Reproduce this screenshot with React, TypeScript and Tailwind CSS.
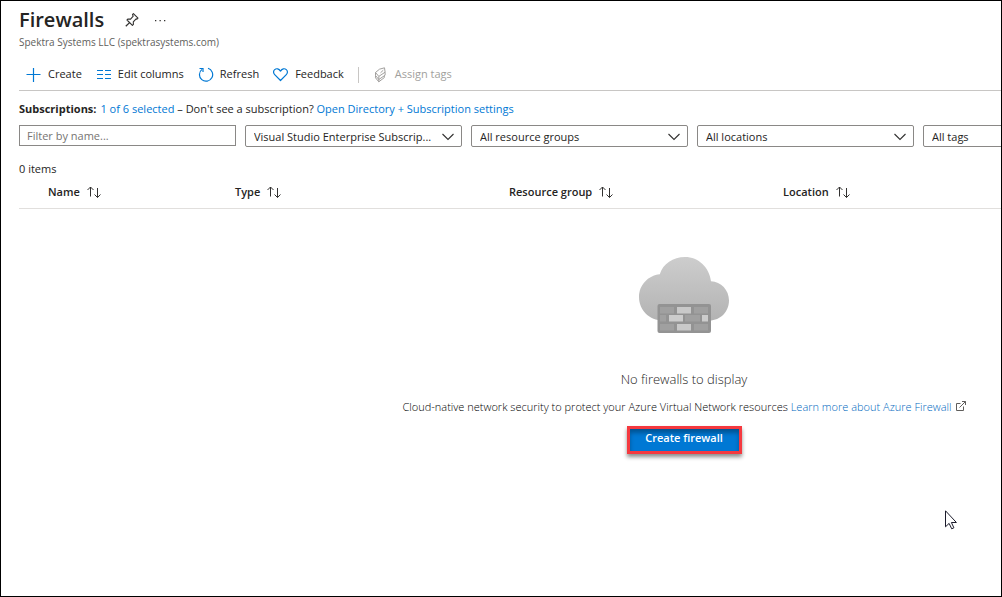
import React from "react";

function PinIcon() {
  return (
    <svg className="size-4" viewBox="0 0 16 16" fill="none" stroke="#323130" strokeWidth="1.1" strokeLinejoin="round" aria-hidden="true">
      <path d="M9.400 1.600l4.600 4.600-1 .9-.9-.2-2.800 2.900.1 2.600-1 1L3 8l1-1 2.600.1L9.200 4.200l-.7-1.600z" />
      <path d="M5.600 10.600L1.800 14.300" strokeWidth="1.300" />
    </svg>
  );
}

function PlusIcon() {
  return (
    <svg className="size-4" viewBox="0 0 16 16" fill="none" stroke="#0078d4" aria-hidden="true">
      <path d="M7.500 1v14M.5 7.500h14" strokeWidth="1.200" />
    </svg>
  );
}

function ColumnsIcon() {
  return (
    <svg className="size-4" viewBox="0 0 16 16" fill="none" stroke="#0078d4" strokeWidth="1.200" aria-hidden="true">
      <path d="M1 3.500h6M1 7.500h6M1 11.500h6M9 3.500h6M9 7.500h6M9 11.500h6" />
    </svg>
  );
}

function RefreshIcon() {
  return (
    <svg className="size-4" viewBox="0 0 16 16" fill="none" stroke="#0078d4" strokeWidth="1.200" aria-hidden="true">
      <path d="M10 1.300A6.600 6.600 0 1 1 4 2.400" />
      <path d="M1.500 1.500h3.500v3.500" />
    </svg>
  );
}

function HeartIcon() {
  return (
    <svg className="size-4" viewBox="0 0 16 16" fill="none" stroke="#0078d4" strokeWidth="1.200" strokeLinejoin="round" aria-hidden="true">
      <path d="M7.500 13.500L1.700 7.700C.1 6.100.3 3.800 1.700 2.600 3.400 1.200 5.900 1.500 7.500 4.100 9.100 1.500 11.600 1.200 13.300 2.600c1.400 1.200 1.600 3.500 0 5.100z" />
    </svg>
  );
}

function TagsIcon() {
  return (
    <svg className="size-4" viewBox="0 0 16 16" fill="none" stroke="#a19f9d" strokeWidth="1" strokeLinejoin="round" aria-hidden="true">
      <path d="M6.500 2.200L11.500.8l.6 4.400L5.800 9.400 2.500 5.500z" />
      <path d="M2.500 5.500v3l3.300 4 6.300-4.300v-3M2.500 8.500v2.300l3.300 4 5.500-4.200V9" />
      <path d="M5.800 9.400v5.400M7.500 5.800l2.800-2.600" />
    </svg>
  );
}

function SortIcon() {
  return (
    <svg className="h-4 w-4" viewBox="0 0 16 16" fill="none" stroke="#323130" strokeWidth="1" aria-hidden="true">
      <path d="M4.500 12.500v-9.500M1.500 6l3-3 3 3M11.500 4v9.500M8.500 10.500l3 3 3-3" />
    </svg>
  );
}

function ChevronIcon() {
  return (
    <svg className="pointer-events-none absolute top-1 right-1.5 size-4" viewBox="0 0 16 16" fill="none" stroke="#323130" strokeWidth="1.100" aria-hidden="true">
      <path d="M2.500 5L8 10.500 13.500 5" />
    </svg>
  );
}

function ExternalIcon() {
  return (
    <svg className="ml-1 inline size-2.5 align-baseline" viewBox="0 0 10 10" fill="none" stroke="#605e5c" strokeWidth="1" aria-hidden="true">
      <path d="M4.500 2.500h-4v7h7v-4M6 .5h3.500V4M9.500.5L3.500 6.500" />
    </svg>
  );
}

function FirewallArt() {
  const bricks: [number, number, number, string][] = [
    [21, 51, 14, "#a0a0a0"],
    [38, 51, 14, "#c9c9c9"],
    [55, 51, 14, "#a0a0a0"],
    [21, 59, 6, "#a0a0a0"],
    [30, 59, 14, "#cccccc"],
    [46, 59, 15, "#a0a0a0"],
    [63, 59, 6, "#cccccc"],
    [21, 68, 14, "#a0a0a0"],
    [38, 68, 14, "#c9c9c9"],
    [55, 68, 14, "#a0a0a0"],
  ];
  return (
    <svg className="h-[76px] w-[90px]" viewBox="0 0 90 76" role="img" aria-label="Firewall">
      <defs>
        <linearGradient id="cloud" x1="0" y1="0" x2="0" y2="1">
          <stop offset="0" stopColor="#cdcdcd" />
          <stop offset="1" stopColor="#b3b3b3" />
        </linearGradient>
      </defs>
      <path
        d="M90 43.500C90 33 82 24.800 72 24.300 70.500 10.500 59.500 0 46 0 34 0 24 6.800 20.800 17.200 9 18.500 0 28 0 40c0 13 10.500 23.500 24 23.500h46.500C81.500 63.500 90 54.500 90 43.500z"
        fill="url(#cloud)"
      />
      <rect x="18.500" y="47" width="53.500" height="29" rx="2" fill="#939393" />
      {bricks.map(([x, y, w, fill]) => (
        <rect key={`${x}-${y}`} x={x} y={y - 1} width={w} height="6.500" fill={fill} />
      ))}
    </svg>
  );
}

function Command({ icon, label, disabled }: { icon: React.ReactNode; label: string; disabled?: boolean }) {
  return (
    <button type="button" disabled={disabled} className="flex shrink-0 items-center gap-1.5 disabled:text-[#a19f9d]">
      {icon}
      {label}
    </button>
  );
}

function Filter({ label, value }: { label: string; value: string }) {
  return (
    <div className="relative w-[217px] shrink-0">
      <select aria-label={label} className="block h-[22px] w-full appearance-none rounded-xs border border-[#8a8886] bg-white pt-0.5 pr-6 pl-2">
        <option>{value}</option>
      </select>
      <ChevronIcon />
    </div>
  );
}

const columns = [
  { name: "Name", style: "w-[216px] pl-[29px]" },
  { name: "Type", style: "w-[274px]" },
  { name: "Resource group", style: "w-[274px]" },
  { name: "Location", style: "" },
];

export default function App() {
  return (
    <div className="min-h-screen overflow-hidden border border-black bg-white font-['Open_Sans','Noto_Sans',sans-serif] text-[11px] text-[#252423]">
      <div className="min-w-[1348px] pl-[18px]">
        <header className="pt-[5px]">
          <div className="flex h-7 items-center">
            <h1 className="text-xl leading-7 font-semibold">Firewalls</h1>
            <button type="button" aria-label="Pin" className="ml-5">
              <PinIcon />
            </button>
            <button type="button" aria-label="More" className="ml-[15px]">
              <svg className="h-4 w-3" viewBox="0 0 12 16" fill="#323130" aria-hidden="true">
                <path d="M0 8h1.300v1.300H0zM4.500 8h1.300v1.300H4.500zM9 8h1.300v1.300H9z" />
              </svg>
            </button>
          </div>
          <p className="text-[10px] leading-4 text-[#605e5c]">Spektra Systems LLC (spektrasystems.com)</p>
        </header>

        <div role="toolbar" aria-label="Commands" className="mt-[9px] flex h-8 items-center gap-3.5 border-b border-[#c8c6c4] pl-[7px]">
          <Command icon={<PlusIcon />} label="Create" />
          <Command icon={<ColumnsIcon />} label="Edit columns" />
          <Command icon={<RefreshIcon />} label="Refresh" />
          <Command icon={<HeartIcon />} label="Feedback" />
          <span className="h-4 w-px bg-[#c8c6c4]" />
          <Command icon={<TagsIcon />} label="Assign tags" disabled />
        </div>

        <p className="mt-2 leading-5">
          <strong className="mr-1 font-bold">Subscriptions:</strong>
          <a href="#subscriptions" className="text-[#0078d4]">1 of 6 selected</a> – Don't see a subscription?{" "}
          <a href="#settings" className="text-[#0078d4]">Open Directory + Subscription settings</a>
        </p>

        <div className="mt-1.5 flex items-start gap-[9px]">
          <input
            type="text"
            aria-label="Filter by name"
            placeholder="Filter by name..."
            className="h-[21px] w-[217px] shrink-0 border border-[#8a8886] px-[7px] placeholder:text-[#767472]"
          />
          <Filter label="Subscription" value="Visual Studio Enterprise Subscrip..." />
          <Filter label="Resource group" value="All resource groups" />
          <Filter label="Location" value="All locations" />
          <Filter label="Tags" value="All tags" />
        </div>

        <p className="mt-3 leading-5">0 items</p>

        <table className="w-full table-fixed border-b border-[#e1dfdd] text-left">
          <thead>
            <tr className="h-[29px] align-top">
              {columns.map((c) => (
                <th key={c.name} scope="col" className={`pt-[5px] font-semibold ${c.style}`}>
                  <button type="button" className="flex items-center gap-1.5">
                    {c.name}
                    <SortIcon />
                  </button>
                </th>
              ))}
            </tr>
          </thead>
        </table>

        <main className="flex flex-col items-center pt-12">
          <FirewallArt />
          <h2 className="mt-9 text-[13px] leading-5 font-light">No firewalls to display</h2>
          <p className="mt-2 leading-5 font-light text-black">
            Cloud-native network security to protect your Azure Virtual Network resources{" "}
            <a href="#learn" className="text-[#0069c0]">
              Learn more about Azure Firewall
              <ExternalIcon />
            </a>
          </p>
          <button
            type="button"
            className="mt-[9px] h-7 w-[115px] border-3 border-[#f5393f] bg-[#0078d4] pb-0.5 font-semibold text-white shadow-[0_3px_4px_rgba(0,0,0,0.45),inset_0_4px_4px_rgba(0,0,0,0.3)]"
          >
            Create firewall
          </button>
        </main>
      </div>

      <svg className="pointer-events-none absolute top-[510px] left-[945px] h-5 w-3" viewBox="0 0 12 20" fill="#fff" stroke="#1b1b2b" strokeWidth="1" aria-hidden="true">
        <path d="M.5.8v16l3.600-3.400 2.600 5.400 2.200-1-2.500-5.300h5z" />
      </svg>
    </div>
  );
}
